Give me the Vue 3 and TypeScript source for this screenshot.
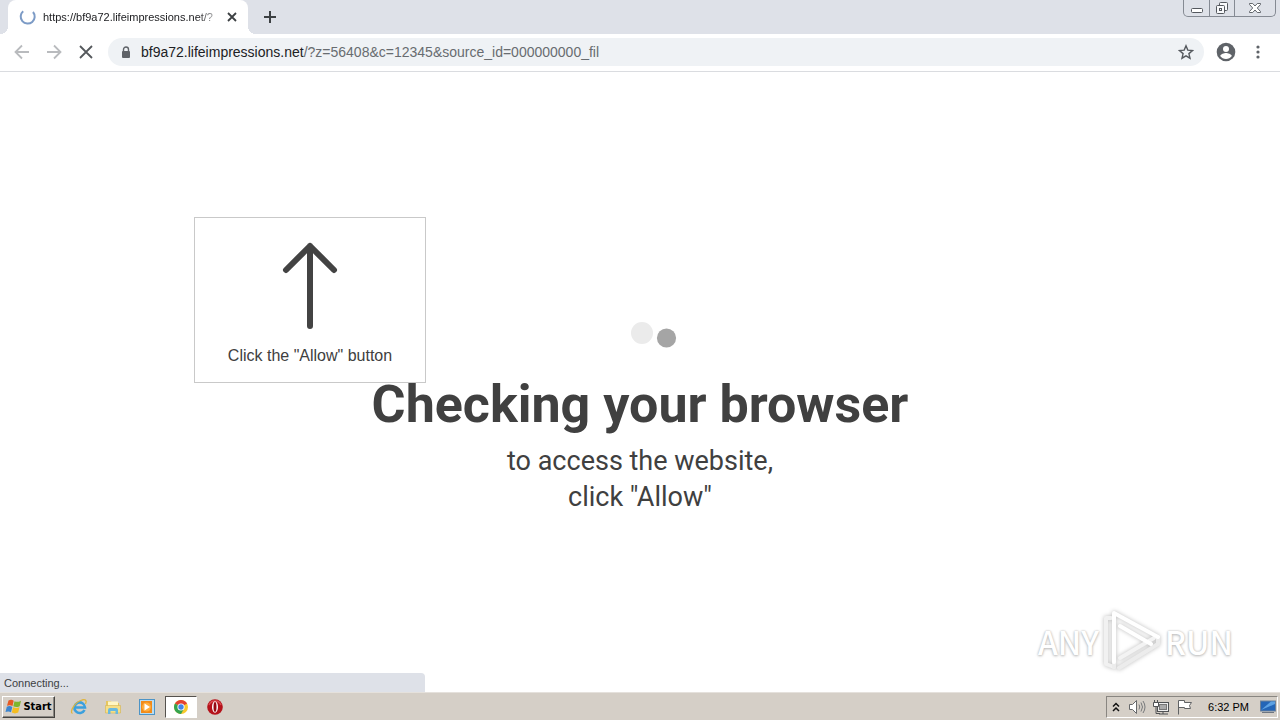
<script setup lang="ts">
import { ref } from 'vue'

const tabTitle = 'https://bf9a72.lifeimpressions.net/?'
const host = 'bf9a72.lifeimpressions.net'
const query = '/?z=56408&c=12345&source_id=000000000_fil'
const status = ref('Connecting...')
const clock = ref('6:32 PM')
</script>

<template>
  <div class="desktop">
    <header class="tabstrip">
      <div class="tab">
        <svg class="spinner" viewBox="0 0 18 18" aria-hidden="true">
          <path d="M4.2 3.2A7 7 0 1 0 14 4" fill="none" stroke="#7c9bc6" stroke-width="2" />
        </svg>
        <span class="tab-title">{{ tabTitle }}</span>
        <button class="tab-close" aria-label="Close tab">
          <svg viewBox="0 0 10 10"><path d="M1 1l8 8M9 1l-8 8" stroke="#3c4043" stroke-width="1.8" /></svg>
        </button>
      </div>
      <button class="new-tab" aria-label="New tab">
        <svg viewBox="0 0 12 12"><path d="M6 0v12M0 6h12" stroke="#3c4043" stroke-width="2" /></svg>
      </button>
      <div class="window-controls">
        <button class="win min" aria-label="Minimize">
          <svg viewBox="0 0 14 14"><rect x="1.5" y="7.500" width="11" height="4" rx="1" fill="#fff" stroke="#54585e" /></svg>
        </button>
        <button class="win max" aria-label="Restore">
          <svg viewBox="0 0 14 14"><g fill="#f8f9fb" stroke="#54585e"><rect x="4.500" y="1.500" width="8" height="8" rx="1" /><rect x="1.500" y="4.500" width="8" height="8" rx="1" /><rect x="4.500" y="7.500" width="2" height="2" /></g></svg>
        </button>
        <button class="win close" aria-label="Close window">
          <svg viewBox="0 0 14 14"><path d="M1.500 2.500h3.200L7 5l2.300-2.500h3.200v1L9.300 7l3.200 3.500v1H9.300L7 9l-2.300 2.500H1.500v-1L4.700 7 1.500 3.500z" fill="#fff" stroke="#54585e" stroke-width=".9" /></svg>
        </button>
      </div>
    </header>

    <nav class="toolbar">
      <button class="tool" aria-label="Back">
        <svg viewBox="0 0 16 16"><path d="M15 8H2M8 1.500L1.500 8 8 14.500" fill="none" stroke="#b9bbbe" stroke-width="1.800" /></svg>
      </button>
      <button class="tool" aria-label="Forward">
        <svg viewBox="0 0 16 16"><path d="M1 8h13M8 1.500L14.500 8 8 14.500" fill="none" stroke="#b9bbbe" stroke-width="1.800" /></svg>
      </button>
      <button class="tool" aria-label="Stop loading">
        <svg viewBox="0 0 16 16"><path d="M2 2l12 12M14 2L2 14" stroke="#55585c" stroke-width="1.800" /></svg>
      </button>
      <div class="omnibox">
        <svg class="lock" viewBox="0 0 10 13" aria-hidden="true">
          <path d="M2.500 6V3.500a2.500 2.500 0 0 1 5 0V6" fill="none" stroke="#5f6368" stroke-width="1.400" />
          <rect x="1" y="5" width="8" height="7" rx="1" fill="#5f6368" />
        </svg>
        <span class="url">{{ host }}<span class="query">{{ query }}</span></span>
        <button class="star" aria-label="Bookmark this page">
          <svg viewBox="0 0 16 16"><path d="M8 1.800l1.800 4.300 4.700.4-3.600 3.100 1.100 4.600L8 11.800l-4 2.400 1.100-4.600L1.500 6.500l4.700-.4z" fill="none" stroke="#55595e" stroke-width="1.400" /></svg>
        </button>
      </div>
      <button class="account" aria-label="Account">
        <svg viewBox="0 0 20 20"><circle cx="10" cy="10" r="9.300" fill="#5f6368" /><circle cx="10" cy="7" r="3" fill="#fff" /><path d="M4.200 14c.4-2 4-3 5.800-3s5.400 1 5.800 3c-1.400 1.900-3.400 3-5.800 3s-4.400-1.100-5.800-3z" fill="#fff" /></svg>
      </button>
      <button class="menu" aria-label="Menu">
        <svg viewBox="0 0 4 16"><g fill="#5f6368"><circle cx="2" cy="3" r="1.600" /><circle cx="2" cy="8" r="1.600" /><circle cx="2" cy="13" r="1.600" /></g></svg>
      </button>
    </nav>

    <main class="page">
      <div class="check">
        <svg class="dots" viewBox="0 0 50 32" aria-hidden="true"><circle cx="14" cy="13" r="11" fill="#ebebeb" /><circle cx="38.500" cy="18" r="9.600" fill="#a5a5a5" /></svg>
        <h1>Checking your browser</h1>
        <p>to access the website,<br />click "Allow"</p>
      </div>

      <aside class="hint">
        <svg viewBox="0 0 56 88" aria-hidden="true"><path d="M28 84V4M4 28L28 4l24 24" fill="none" stroke="#434343" stroke-width="6" stroke-linecap="round" stroke-linejoin="round" /></svg>
        <span>Click the "Allow" button</span>
      </aside>

      <div class="watermark">
        <span>ANY</span>
        <svg viewBox="0 0 60 64" aria-hidden="true">
          <g fill="none" stroke-width="4" stroke-linejoin="round" stroke-linecap="round">
            <path d="M9 9H4v46l8 3" stroke="#f1f1f1" />
            <path d="M17 59l39-24v-7M12 58V46" stroke="#ececec" />
            <path d="M18 49l34-20" stroke="#f3f3f3" />
            <path d="M12 53V4l44 24M18 17l31 18" stroke="#fff" />
          </g>
        </svg>
        <span>RUN</span>
      </div>

      <div class="status" role="status">{{ status }}</div>
    </main>

    <footer class="taskbar">
      <button class="start">
        <svg viewBox="0 0 18 18" aria-hidden="true">
          <path d="M3.500 2.500c2-1 3.700-.8 5.200.2L7.500 8C5.800 7 4 7 2 7.800z" fill="#e65a24" />
          <path d="M9.500 3.200c2 1 4 .9 6.500-.5l-1.300 5.500c-2.500 1.100-4.400 1.100-6.400.1z" fill="#7eb62d" />
          <path d="M1.800 8.700c2-.9 3.800-.8 5.500.2L6 14.300c-1.800-1-3.500-1-5.500-.2z" fill="#3c85cf" />
          <path d="M8.100 9.300c2.100 1 4 .9 6.400-.1L13.200 14.600c-2.400 1.100-4.300 1-6.400 0z" fill="#f5bd20" />
        </svg>
        <span>Start</span>
      </button>
      <div class="launchers">
        <button class="launch" aria-label="Internet Explorer">
          <svg viewBox="0 0 18 18"><path d="M14.500 12A5.300 5.300 0 1 1 15 9.500H5" fill="none" stroke="#3ba0dd" stroke-width="2.600" /><path d="M2.500 15.500C-1 14 5 4 12 2c4-1 5 1 3.500 4" fill="none" stroke="#dfb53e" stroke-width="1.300" /></svg>
        </button>
        <button class="launch" aria-label="File Explorer">
          <svg viewBox="0 0 18 18"><path d="M2 3h5l1 2h7v10H2z" fill="#e6c65e" /><path d="M4 3.500h10v5H4z" fill="#fff6c3" /><path d="M1.500 7.500h15V15h-15z" fill="#f6df86" stroke="#d4b350" stroke-width=".6" /><path d="M4 16v-4q0-2 2-2h6q2 0 2 2v4h-2.500v-3h-5v3z" fill="#69b9df" /></svg>
        </button>
        <button class="launch" aria-label="Media Player">
          <svg viewBox="0 0 18 18"><rect x="1.500" y="1.500" width="15" height="15" fill="#b9dcf1" stroke="#4d94c6" /><rect x="3" y="3" width="11" height="12" fill="#f28b19" /><circle cx="8.500" cy="9" r="4.500" fill="#ffad3d" /><path d="M6.500 5.500v7l5.500-3.500z" fill="#fff" /></svg>
        </button>
        <button class="launch active" aria-label="Chrome">
          <svg viewBox="0 0 18 18"><circle cx="9" cy="9" r="7" fill="#f8c92d" /><path d="M9 9L2.940 5.500a7 7 0 0 1 12.120 0z" fill="#e34232" /><path d="M9 9L2.940 5.500A7 7 0 0 0 9 16l3-5.200z" fill="#35a450" /><circle cx="9" cy="9" r="3.600" fill="#fff" /><circle cx="9" cy="9" r="2.700" fill="#4285e8" /></svg>
        </button>
        <button class="launch" aria-label="Opera">
          <svg viewBox="0 0 18 18"><circle cx="9" cy="9" r="7.800" fill="#b5121b" /><path d="M3 7a6.500 6.500 0 0 1 12 0" fill="none" stroke="#d9484c" stroke-width="1.500" /><ellipse cx="9" cy="9" rx="3" ry="5.800" fill="#fff" /><ellipse cx="9" cy="9" rx="1.500" ry="4.900" fill="#970a13" /></svg>
        </button>
      </div>
      <div class="tray">
        <svg class="chev" viewBox="0 0 8 10" aria-label="Show hidden icons"><path d="M1 4.500l3-3 3 3M1 9l3-3 3 3" fill="none" stroke="#111" stroke-width="1.500" /></svg>
        <svg class="tray-icon" viewBox="0 0 18 16" aria-label="Volume"><path d="M1.500 5.500h3l4-4v13l-4-4h-3z" fill="#fff" stroke="#66686a" /><path d="M11 5.500q1.500 2.500 0 5M13 3.500q3 4.500 0 9M15 2q4 6 0 12" fill="none" stroke="#77797b" /></svg>
        <svg class="tray-icon" viewBox="0 0 18 16" aria-label="Network"><rect x="5.500" y="3.500" width="11" height="9" fill="#eee" stroke="#505254" /><rect x="7.500" y="5.500" width="7" height="5" fill="#aaa" stroke="#777" /><path d="M7 15h9M11 12v3" stroke="#505254" /><path d="M2.500 1v3M5.500 1v3M1.500 3.500h5v4h-5zM4 8v6.500h4" fill="none" stroke="#505254" /><rect x="2" y="4" width="4" height="3" fill="#fff" /></svg>
        <svg class="tray-icon" viewBox="0 0 18 16" aria-label="Action Center"><path d="M2.500 15.500V1.500h6v2h7l-2 3 1 3h-6v-1h-6" fill="#fff" stroke="#606264" /></svg>
        <time>{{ clock }}</time>
        <svg class="desk-icon" viewBox="0 0 16 14" aria-label="Show desktop"><rect x=".5" y="1" width="15" height="10" fill="#2365b7" stroke="#6d8199" /><path d="M1 10L11 1.500h4V4z" fill="#5ca1e3" /><path d="M2 12.500h12" stroke="#6e7681" /></svg>
      </div>
    </footer>
  </div>
</template>

<style>
body { margin: 0; }
</style>

<style scoped>
* { box-sizing: border-box; }
svg { display: block; flex: none; }
button {
  display: flex;
  align-items: center;
  justify-content: center;
  padding: 0;
  border: 0;
  background: none;
}
.desktop {
  display: flex;
  flex-direction: column;
  min-height: 100vh;
  background: #fff;
  color: #202124;
  font: 11px/16px "Liberation Sans", sans-serif;
}
.tabstrip {
  display: flex;
  height: 34px;
  padding-left: 8px;
  background: #dee1e8;
}
.tab {
  position: relative;
  display: flex;
  align-items: center;
  width: 240px;
  padding: 0 10px 0 11px;
  background: #fff;
  border-radius: 8px 8px 0 0;
}
.tab::before,
.tab::after {
  content: "";
  position: absolute;
  bottom: 0;
  width: 8px;
  height: 8px;
}
.tab::before { left: -8px; background: radial-gradient(circle at 0 0, transparent 8px, #fff 8px); }
.tab::after { right: -8px; background: radial-gradient(circle at 100% 0, transparent 8px, #fff 8px); }
.spinner { width: 18px; height: 18px; }
.tab-title {
  flex: 1;
  min-width: 0;
  margin-left: 6px;
  overflow: hidden;
  white-space: nowrap;
  mask-image: linear-gradient(to right, #000 88%, transparent 104%);
}
.tab-close { width: 12px; height: 16px; margin-left: 8px; }
.tab-close svg { width: 10px; height: 10px; }
.new-tab { width: 28px; margin-left: 8px; }
.new-tab svg { width: 12px; height: 12px; }
.window-controls {
  display: flex;
  height: 17px;
  margin: 0 4px 0 auto;
  border: 1px solid #858a93;
  border-top: 0;
  border-radius: 0 0 5px 5px;
}
.win { width: 25px; }
.win svg { width: 14px; height: 14px; }
.win + .win { border-left: 1px solid #858a93; }
.window-controls .close { width: 41px; }
.toolbar {
  display: flex;
  align-items: center;
  height: 38px;
  padding: 0 12px 1px 14px;
  border-bottom: 1px solid #dadce0;
}
.tool { width: 16px; height: 28px; margin-right: 16px; }
.tool svg { width: 16px; height: 16px; }
.omnibox {
  display: flex;
  flex: 1;
  align-items: center;
  min-width: 0;
  height: 28px;
  margin-left: -2px;
  padding: 0 10px 0 13px;
  background: #eff2f5;
  border-radius: 14px;
}
.lock { width: 10px; height: 13px; }
.url {
  flex: 1;
  min-width: 0;
  margin-left: 10px;
  overflow: hidden;
  white-space: nowrap;
  font-size: 14px;
  line-height: 20px;
}
.query { color: #686c70; }
.star svg { width: 16px; height: 16px; }
.account { margin-left: 12px; }
.account svg { width: 20px; height: 20px; }
.menu { width: 20px; margin-left: 12px; }
.menu svg { width: 4px; height: 16px; }
.page {
  position: relative;
  display: flex;
  flex: 1;
  flex-direction: column;
  align-items: center;
  justify-content: center;
  overflow: hidden;
  color: #404040;
  font-family: Roboto, sans-serif;
  text-align: center;
}
.check { display: flex; flex-direction: column; align-items: center; padding-top: 71px; }
.dots { width: 50px; height: 32px; margin-left: 26px; }
h1 { margin: 31px 0 16px; font-size: 52px; font-weight: 700; line-height: 44px; }
p { margin: 0; font-size: 27px; line-height: 36px; }
.hint {
  position: absolute;
  top: 145px;
  left: 194px;
  display: flex;
  flex-direction: column;
  align-items: center;
  width: 232px;
  padding: 24px 0 16px;
  background: #fff;
  border: 1px solid #c9c9c9;
  font: 16px/20px "Liberation Sans", sans-serif;
}
.hint svg { width: 56px; height: 88px; margin-bottom: 16px; }
.watermark {
  position: absolute;
  right: 47px;
  bottom: 19px;
  display: flex;
  align-items: center;
  gap: 3px;
  color: #fff;
  font: 500 32px/64px "Noto Sans CJK SC", sans-serif;
  text-shadow: 0 0 2px #bbb, 0 1px 3px #bbb;
}
.watermark svg { width: 60px; height: 64px; filter: drop-shadow(0 0 2px #bbb); }
.status {
  position: absolute;
  bottom: 0;
  left: 0;
  width: 425px;
  height: 19px;
  padding-left: 4px;
  background: #dee1e8;
  border-radius: 0 4px 0 0;
  color: #3c4043;
  font: 11px/20px "Liberation Sans", sans-serif;
  text-align: left;
}
.taskbar {
  display: flex;
  align-items: center;
  height: 28px;
  padding: 1px 2px 0;
  background: #d5cfc7;
  border-top: 1px solid #e5e1dc;
}
.start {
  width: 53px;
  height: 22px;
  border: 1px solid;
  border-color: #fff #44423f #44423f #fff;
  box-shadow: inset -1px -1px #8a8782;
  color: #000;
  font: bold 11px/16px "DejaVu Sans Condensed", sans-serif;
}
.start svg { width: 18px; height: 18px; }
.launchers { display: flex; gap: 2px; margin-left: 8px; }
.launch { width: 32px; height: 22px; }
.launch svg { width: 18px; height: 18px; }
.active {
  background: #fff;
  border: 1px solid;
  border-color: #55524e #fff #fff #55524e;
}
.tray {
  display: flex;
  align-items: center;
  height: 22px;
  margin-left: auto;
  padding: 0 1px 0 5px;
  border: 1px solid;
  border-color: #898681 #fff #fff #898681;
  color: #000;
}
.chev { width: 8px; height: 10px; margin-right: 8px; }
.tray-icon { width: 18px; height: 16px; margin-right: 6px; }
time { margin: 0 11px 0 8px; white-space: nowrap; }
.desk-icon { width: 16px; height: 14px; }
</style>
